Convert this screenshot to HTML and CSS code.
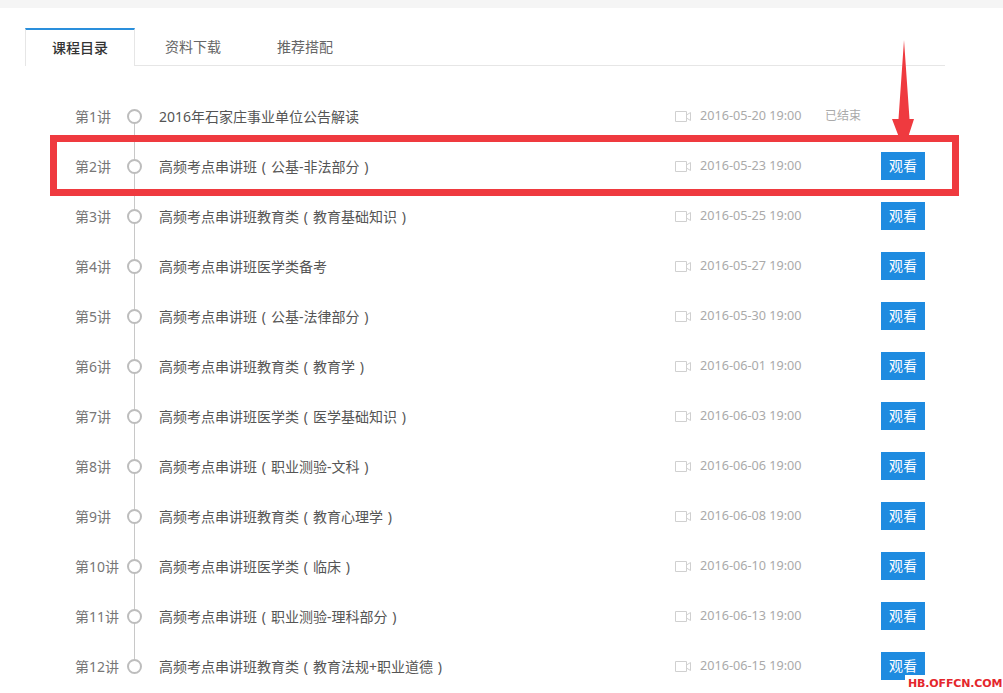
FILE: index.html
```html
<!DOCTYPE html>
<html lang="zh-CN">
<head>
<meta charset="utf-8">
<title>课程目录</title>
<link rel="stylesheet" href="styles.css">
</head>
<body>
<div class="topband"></div>
<main class="panel">
  <nav class="tabs">
    <a class="tab active">课程目录</a>
    <a class="tab">资料下载</a>
    <a class="tab">推荐搭配</a>
  </nav>
  <ul class="lessons">
    <li class="lesson"><span class="num">第1讲</span><span class="dot"></span><span class="title">2016年石家庄事业单位公告解读</span><svg class="cam" viewBox="0 0 16 11"><path d="M.5.5h11v10H.5zM11.500 4l4-2.500v8l-4-2.500"/></svg><span class="date">2016-05-20 19:00</span><span class="action"><span class="ended">已结束</span></span></li>
    <li class="lesson"><span class="num">第2讲</span><span class="dot"></span><span class="title">高频考点串讲班 ( 公基-非法部分 )</span><svg class="cam" viewBox="0 0 16 11"><path d="M.5.5h11v10H.5zM11.500 4l4-2.500v8l-4-2.500"/></svg><span class="date">2016-05-23 19:00</span><span class="action"><a class="watch">观看</a></span></li>
    <li class="lesson"><span class="num">第3讲</span><span class="dot"></span><span class="title">高频考点串讲班教育类 ( 教育基础知识 )</span><svg class="cam" viewBox="0 0 16 11"><path d="M.5.5h11v10H.5zM11.500 4l4-2.500v8l-4-2.500"/></svg><span class="date">2016-05-25 19:00</span><span class="action"><a class="watch">观看</a></span></li>
    <li class="lesson"><span class="num">第4讲</span><span class="dot"></span><span class="title">高频考点串讲班医学类备考</span><svg class="cam" viewBox="0 0 16 11"><path d="M.5.5h11v10H.5zM11.500 4l4-2.500v8l-4-2.500"/></svg><span class="date">2016-05-27 19:00</span><span class="action"><a class="watch">观看</a></span></li>
    <li class="lesson"><span class="num">第5讲</span><span class="dot"></span><span class="title">高频考点串讲班 ( 公基-法律部分 )</span><svg class="cam" viewBox="0 0 16 11"><path d="M.5.5h11v10H.5zM11.500 4l4-2.500v8l-4-2.500"/></svg><span class="date">2016-05-30 19:00</span><span class="action"><a class="watch">观看</a></span></li>
    <li class="lesson"><span class="num">第6讲</span><span class="dot"></span><span class="title">高频考点串讲班教育类 ( 教育学 )</span><svg class="cam" viewBox="0 0 16 11"><path d="M.5.5h11v10H.5zM11.500 4l4-2.500v8l-4-2.500"/></svg><span class="date">2016-06-01 19:00</span><span class="action"><a class="watch">观看</a></span></li>
    <li class="lesson"><span class="num">第7讲</span><span class="dot"></span><span class="title">高频考点串讲班医学类 ( 医学基础知识 )</span><svg class="cam" viewBox="0 0 16 11"><path d="M.5.5h11v10H.5zM11.500 4l4-2.500v8l-4-2.500"/></svg><span class="date">2016-06-03 19:00</span><span class="action"><a class="watch">观看</a></span></li>
    <li class="lesson"><span class="num">第8讲</span><span class="dot"></span><span class="title">高频考点串讲班 ( 职业测验-文科 )</span><svg class="cam" viewBox="0 0 16 11"><path d="M.5.5h11v10H.5zM11.500 4l4-2.500v8l-4-2.500"/></svg><span class="date">2016-06-06 19:00</span><span class="action"><a class="watch">观看</a></span></li>
    <li class="lesson"><span class="num">第9讲</span><span class="dot"></span><span class="title">高频考点串讲班教育类 ( 教育心理学 )</span><svg class="cam" viewBox="0 0 16 11"><path d="M.5.5h11v10H.5zM11.500 4l4-2.500v8l-4-2.500"/></svg><span class="date">2016-06-08 19:00</span><span class="action"><a class="watch">观看</a></span></li>
    <li class="lesson"><span class="num">第10讲</span><span class="dot"></span><span class="title">高频考点串讲班医学类 ( 临床 )</span><svg class="cam" viewBox="0 0 16 11"><path d="M.5.5h11v10H.5zM11.500 4l4-2.500v8l-4-2.500"/></svg><span class="date">2016-06-10 19:00</span><span class="action"><a class="watch">观看</a></span></li>
    <li class="lesson"><span class="num">第11讲</span><span class="dot"></span><span class="title">高频考点串讲班 ( 职业测验-理科部分 )</span><svg class="cam" viewBox="0 0 16 11"><path d="M.5.5h11v10H.5zM11.500 4l4-2.500v8l-4-2.500"/></svg><span class="date">2016-06-13 19:00</span><span class="action"><a class="watch">观看</a></span></li>
    <li class="lesson"><span class="num">第12讲</span><span class="dot"></span><span class="title">高频考点串讲班教育类 ( 教育法规+职业道德 )</span><svg class="cam" viewBox="0 0 16 11"><path d="M.5.5h11v10H.5zM11.500 4l4-2.500v8l-4-2.500"/></svg><span class="date">2016-06-15 19:00</span><span class="action"><a class="watch">观看</a></span></li>
  </ul>
</main>
<div class="red-box"></div>
<svg class="red-arrow" viewBox="0 0 24 96"><path d="M12 0 17.500 79H22L16.500 96H6.500L0 79H6.500Z"/></svg>
<div class="stamp">HB.OFFCN.COM</div>
</body>
</html>
```
FILE: styles.css
```css
* { box-sizing: border-box; }
html, body { margin: 0; height: 693px; overflow: hidden; background: #fff; }
body { font-family: "Noto Sans", "Noto Sans CJK SC", sans-serif; color: #555; position: relative; }
.topband { height: 8px; background: #f5f5f5; }
.panel { padding: 20px 58px 0 25px; }
.tabs { display: flex; height: 38px; border-bottom: 1px solid #e6e6e6; }
.tab { width: 112px; height: 38px; padding-top: 9px; text-align: center; font-size: 14px; line-height: 20px; color: #666; }
.tab.active { width: 110px; height: 38px; background: #fff; border: 1px solid #e6e6e6; border-top: 2px solid #2a8fdc; border-bottom: 0; color: #333; font-weight: 500; margin-right: 2px; padding-top: 8px; }
.lessons { list-style: none; margin: 25px 0 0; padding: 0 0 0 50px; }
.lesson { position: relative; display: flex; align-items: center; height: 50px; font-size: 14px; }
.lesson::before { content: ""; position: absolute; left: 59px; top: 25px; width: 1px; height: 50px; background: #c8c8c8; }
.lesson:last-child::before { display: none; }
.num { width: 52px; color: #777; white-space: nowrap; }
.dot { position: relative; z-index: 1; width: 15px; height: 15px; margin-right: 17px; border: 2px solid #bdbdbd; border-radius: 50%; background: #fff; }
.title { width: 516px; color: #555; white-space: nowrap; word-spacing: 1.2px; }
.cam { width: 16px; height: 11px; margin-right: 9px; fill: none; stroke: #d0d0d0; }
.date { width: 125px; padding-bottom: 2px; font-size: 12.650px; color: #aaa; white-space: nowrap; }
.action { display: flex; flex: 1; }
.ended { font-size: 12px; color: #aaa; padding-bottom: 2px; }
.watch { display: block; width: 44px; height: 28px; margin-left: 56px; background: #1e8be0; color: #fff; font-size: 14px; line-height: 28px; text-align: center; }
.red-box { position: absolute; left: 50px; top: 135px; width: 909px; height: 61px; border: 7px solid #ef3a3f; }
.red-arrow { position: absolute; left: 892px; top: 40px; width: 24px; height: 96px; fill: #ef3a3f; }
.stamp { position: absolute; left: 905px; top: 675px; width: 98px; height: 18px; padding: 3px 0 0 3px; background: #fff; color: #e4262c; font-family: "DejaVu Sans", sans-serif; font-size: 11px; font-weight: 700; line-height: 12px; letter-spacing: -.15px; white-space: nowrap; }
```
